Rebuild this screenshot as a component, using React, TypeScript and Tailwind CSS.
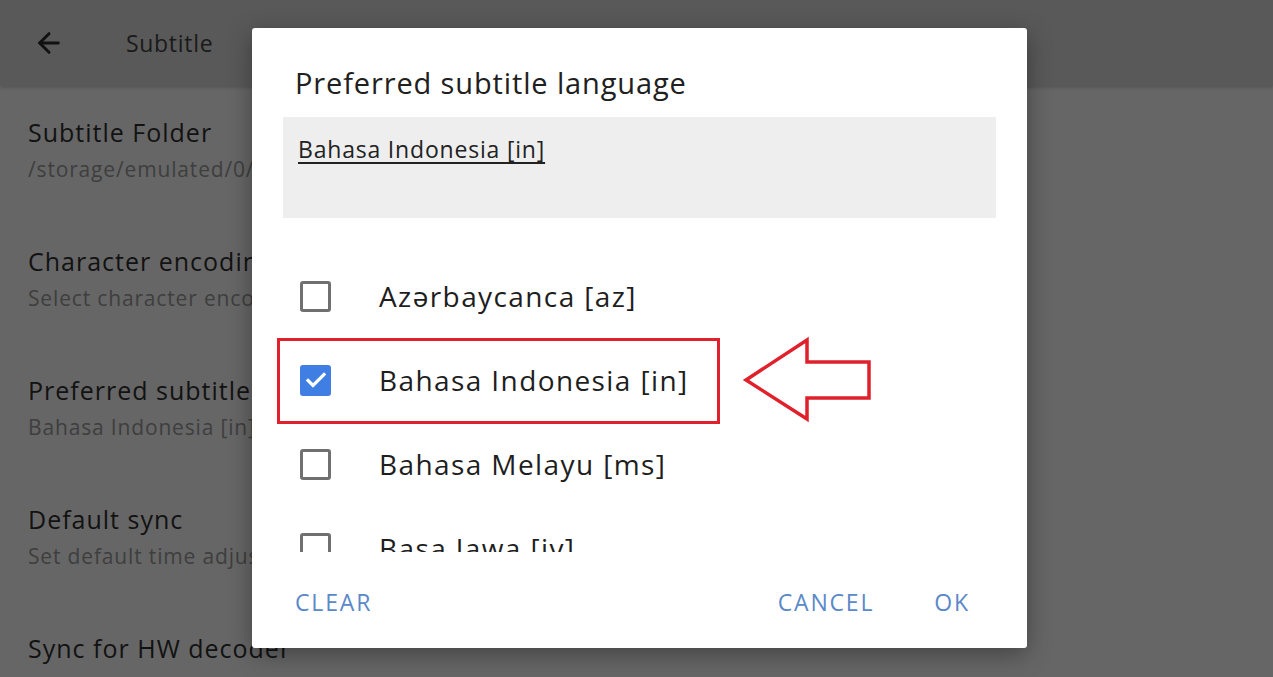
import { ArrowLeft } from "lucide-react";

const settings = [
  { title: "Subtitle Folder", sub: "/storage/emulated/0/Subtitles" },
  { title: "Character encoding", sub: "Select character encoding" },
  { title: "Preferred subtitle language", sub: "Bahasa Indonesia [in]" },
  { title: "Default sync", sub: "Set default time adjustment" },
  { title: "Sync for HW decoder", sub: "Set default time adjustment for HW decoder" },
];

const languages = [
  { label: "Azərbaycanca [az]", checked: false },
  { label: "Bahasa Indonesia [in]", checked: true },
  { label: "Bahasa Melayu [ms]", checked: false },
  { label: "Basa Jawa [jv]", checked: false },
];

function Checkbox({ checked }: { checked: boolean }) {
  if (checked) {
    return (
      <div className="w-[31px] h-[31px] rounded-[3px] bg-[#3f7fe3] flex items-center justify-center shrink-0">
        <svg width="24" height="24" viewBox="0 0 24 24" fill="none" stroke="white" strokeWidth="3.2" strokeLinecap="square">
          <path d="M4 12.5l5 5L20 6.5" />
        </svg>
      </div>
    );
  }
  return <div className="w-[31px] h-[31px] rounded-[3px] border-[3px] border-[#707070] shrink-0" />;
}

export default function App() {
  return (
    <div className="relative w-[1273px] h-[677px] overflow-hidden bg-[#666666] font-['Open_Sans','Lato',sans-serif]">
      {/* app bar */}
      <div className="h-[86px] bg-[#595959] flex items-center shadow-[0_2px_3px_rgba(0,0,0,0.15)]">
        <ArrowLeft className="ml-[33px] w-[32px] h-[32px] text-[#111]" strokeWidth={2.2} />
        <span className="ml-[61px] text-[23px] text-[#1a1a1a] tracking-[0.03em]">Subtitle</span>
      </div>

      {/* settings list */}
      <div className="pl-[28px] flex flex-col">
        {settings.map((s) => (
          <div key={s.title} className="h-[129px] flex flex-col justify-center gap-[7px] whitespace-nowrap">
            <span className="text-[25px] leading-[30px] text-[#121212] tracking-[0.04em]">{s.title}</span>
            <span className="text-[21px] leading-[30px] text-[#3e3e3e] tracking-[0.04em]">{s.sub}</span>
          </div>
        ))}
      </div>

      {/* dialog */}
      <div className="absolute left-[252px] top-[28px] w-[775px] h-[620px] bg-white rounded-[3px] shadow-[0_6px_24px_rgba(0,0,0,0.35)] flex flex-col">
        <div className="pl-[43px] pt-[36px] text-[29px] leading-[38px] text-[#202020] tracking-[0.03em]">Preferred subtitle language</div>
        <div className="mx-[31px] mt-[15px] h-[101px] bg-[#eeeeee] pl-[15px] pt-[15px]">
          <span className="text-[23px] text-[#222] tracking-[0.035em] underline underline-offset-[4px] decoration-[1.5px]">Bahasa Indonesia [in]</span>
        </div>
        <div className="mt-[14px] h-[320px] overflow-hidden pt-[22px]">
          {languages.map((l) => (
            <div key={l.label} className="h-[84px] flex items-center pl-[48px]">
              <Checkbox checked={l.checked} />
              <span className="ml-[48px] text-[28px] text-[#1e1e1e] tracking-[0.05em] whitespace-nowrap">{l.label}</span>
            </div>
          ))}
        </div>
        <div className="flex items-center mt-[33px] px-[43px] text-[23px] tracking-[0.08em] text-[#5a88c8]">
          <span>CLEAR</span>
          <span className="ml-auto">CANCEL</span>
          <span className="ml-[60px] mr-[14px]">OK</span>
        </div>

        {/* highlight box */}
        <div className="absolute left-[25px] top-[310px] w-[443px] h-[86px] border-[3px] border-[#e0212b]" />
      </div>

      {/* red arrow */}
      <svg className="absolute left-[740px] top-[330px]" width="136" height="94" viewBox="0 0 136 94">
        <path
          d="M6 50 L67 10 L67 32 L129 32 L129 68 L67 68 L67 89 Z"
          fill="white"
          stroke="#e0212b"
          strokeWidth="3.5"
          strokeLinejoin="miter"
        />
      </svg>
    </div>
  );
}
